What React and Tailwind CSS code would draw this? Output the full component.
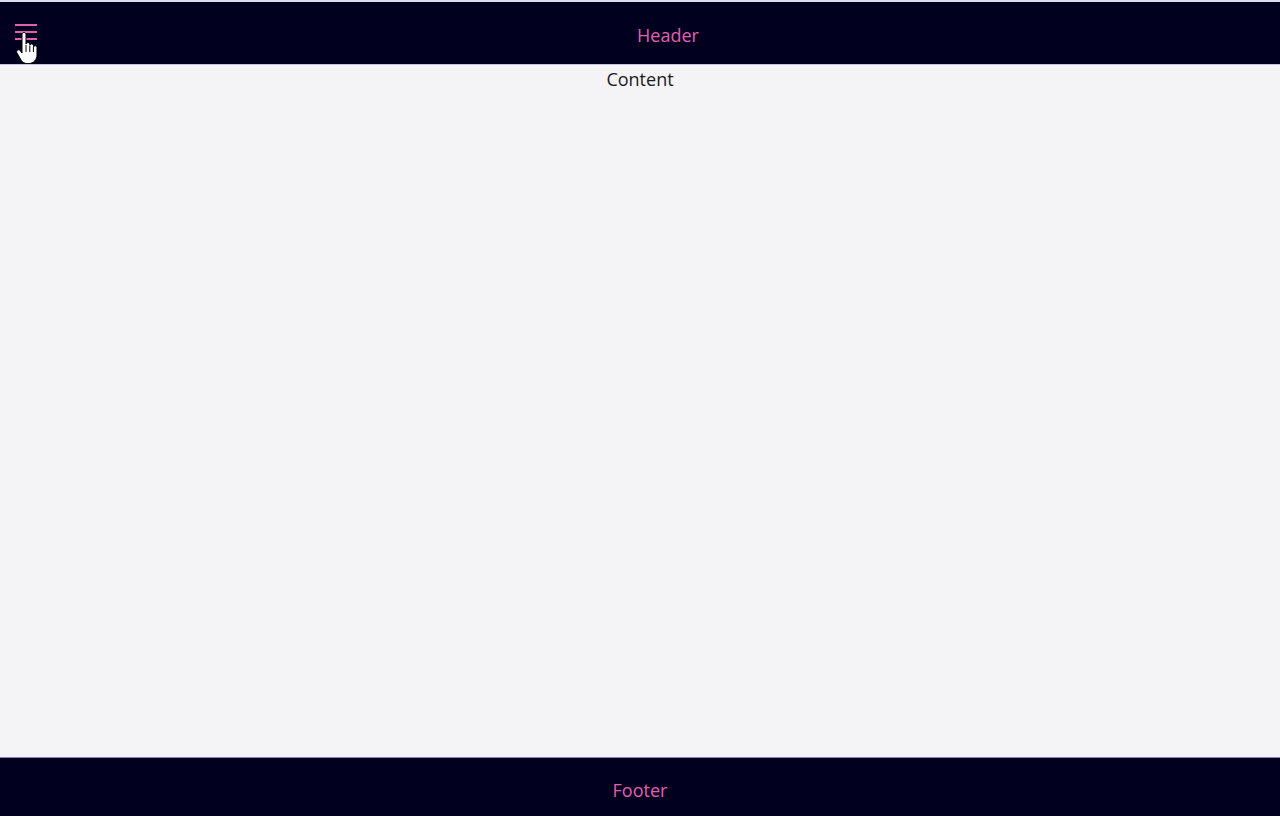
import React, { useState } from "react";

const HandCursor = () => (
  <svg
    width="22"
    height="32"
    viewBox="0 0 22 32"
    className="absolute left-[16px] top-[30px] pointer-events-none"
  >
    <path
      d="M6 2.5c0-1.2 1-2 2-2s2 .8 2 2V12c.3-.9 1-1.4 1.9-1.4 1.1 0 1.9.8 1.9 1.9v.6c.3-.7 1-1.2 1.8-1.2 1.1 0 1.9.8 1.9 1.9v1c.3-.6 1-1 1.7-1 1.1 0 1.8.8 1.8 1.9v7.3c0 4.6-3.4 8.5-8.2 8.5H11c-2.6 0-4.6-1.2-6-3.4L1 21c-.7-1-.4-2.2.5-2.8.9-.6 2.1-.4 2.8.5L6 21V2.5z"
      fill="#ffffff"
      stroke="#000000"
      strokeWidth="1"
    />
    <path d="M10 13v7M13.8 13.5v6.5M17.4 15v5" stroke="#000000" strokeWidth="1" />
  </svg>
);

const App = () => {
  const [open, setOpen] = useState(false);

  return (
    <div
      className="min-h-screen flex flex-col bg-[#f4f3f5]"
      style={{ fontFamily: '"Open Sans", "Noto Sans", sans-serif' }}
    >
      <div className="h-[2px] bg-[#dcdcec]" />
      <header className="relative h-[63px] flex items-center bg-[#02001f] border-b border-[#c9c4e6]">
        <button
          type="button"
          onClick={() => setOpen(!open)}
          className="w-[56px] h-full flex items-center pl-[15px] pb-[3px]"
        >
          <span className="flex flex-col gap-[5px] w-[22px]">
            <span className="h-[2px] bg-[#e060b0]" />
            <span className="h-[2px] bg-[#e060b0]" />
            <span className="h-[2px] bg-[#e060b0]" />
          </span>
        </button>
        <h1 className="flex-1 text-center text-[18px] text-[#e060b0] pt-[4px]">Header</h1>
        <HandCursor />
      </header>
      <main className="flex-1 text-center text-[18px] text-[#1b1b22] leading-[28px]">
        Content
      </main>
      <footer className="h-[59px] flex items-center justify-center pt-[6px] bg-[#02001f] border-t border-[#8a84b0] text-[18px] text-[#e060b0]">
        Footer
      </footer>
    </div>
  );
};

export default App;
